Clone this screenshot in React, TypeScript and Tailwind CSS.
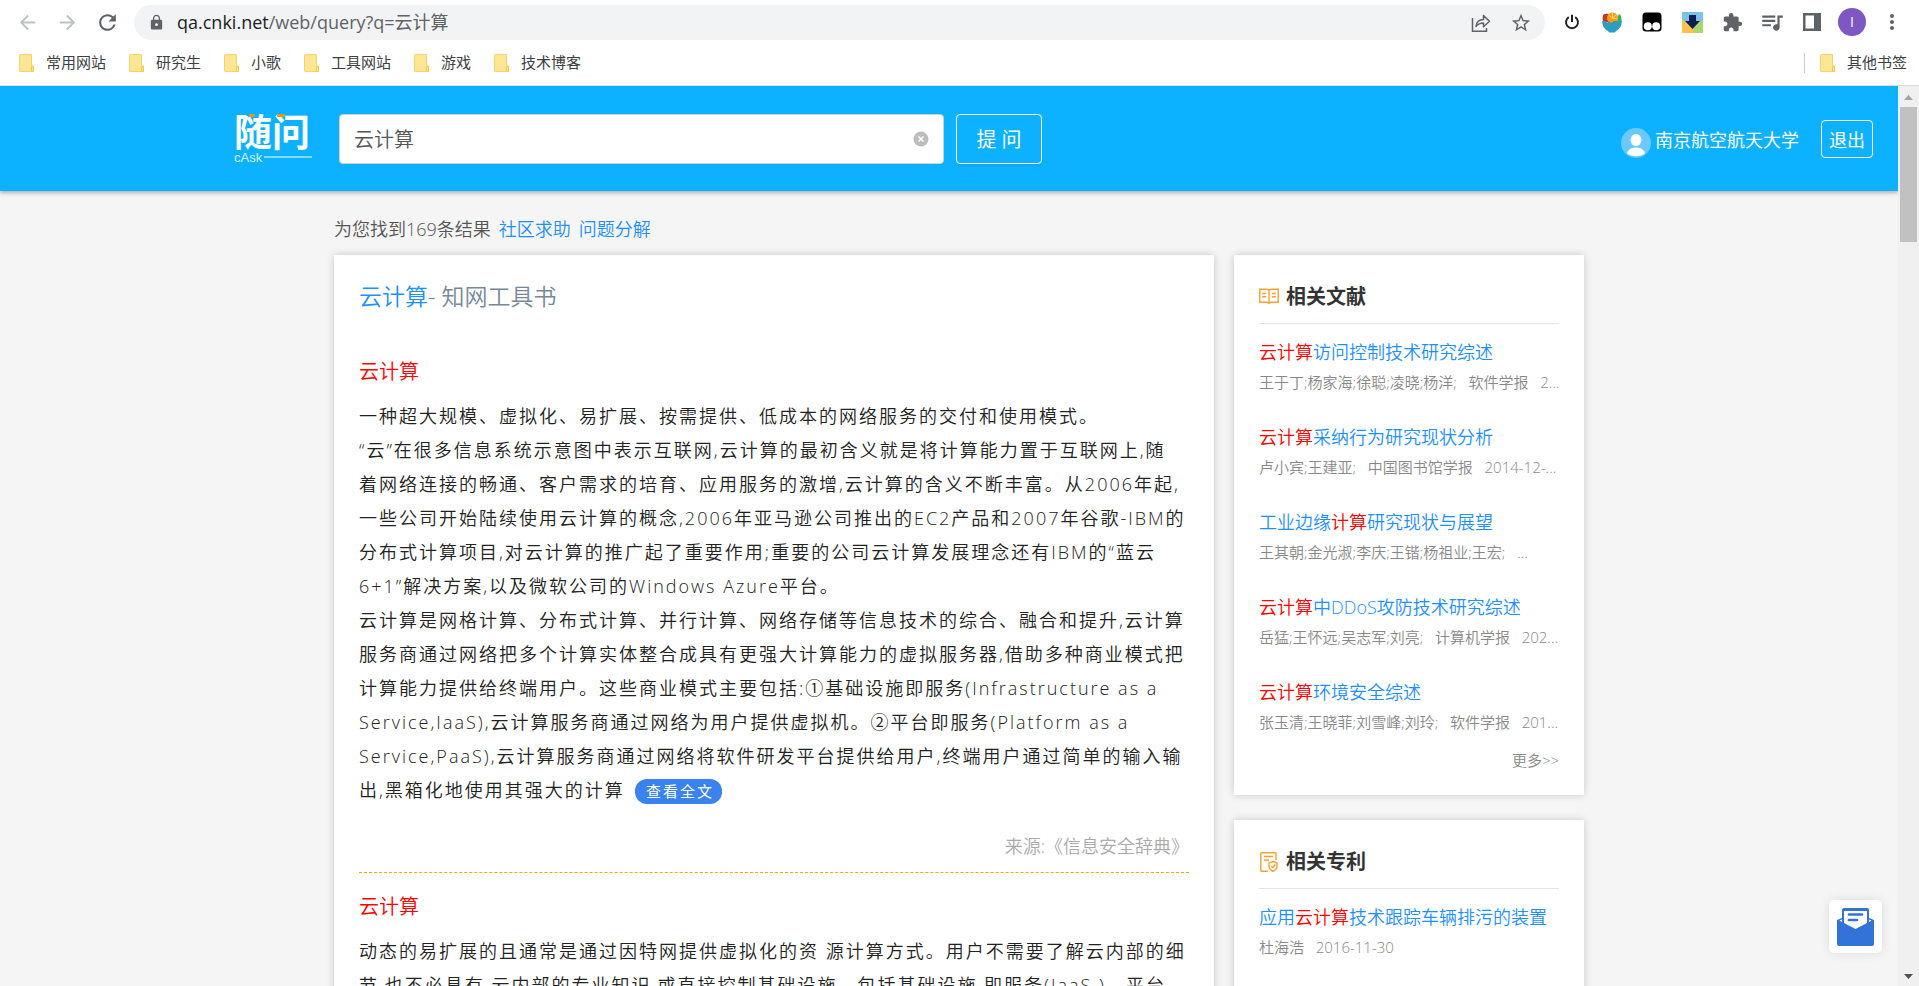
import type { ReactNode } from "react";
import {
  MdArrowBack,
  MdArrowForward,
  MdExtension,
  MdLock,
  MdMoreVert,
  MdQueueMusic,
  MdRefresh,
  MdStarBorder,
} from "react-icons/md";

const bookmarks = ["常用网站", "研究生", "小歌", "工具网站", "游戏", "技术博客"];

type Doc = { title: ReactNode; meta: string };

const papers: Doc[] = [
  { title: <><Hit>云计算</Hit>访问控制技术研究综述</>, meta: "王于丁;杨家海;徐聪;凌晓;杨洋;\u00a0\u00a0 软件学报\u00a0\u00a0 2..." },
  { title: <><Hit>云计算</Hit>采纳行为研究现状分析</>, meta: "卢小宾;王建亚;\u00a0\u00a0 中国图书馆学报\u00a0\u00a0 2014-12-..." },
  { title: <>工业边缘<Hit>计算</Hit>研究现状与展望</>, meta: "王其朝;金光淑;李庆;王锴;杨祖业;王宏;\u00a0\u00a0 ..." },
  { title: <><Hit>云计算</Hit>中DDoS攻防技术研究综述</>, meta: "岳猛;王怀远;吴志军;刘亮;\u00a0\u00a0 计算机学报\u00a0\u00a0 202..." },
  { title: <><Hit>云计算</Hit>环境安全综述</>, meta: "张玉清;王晓菲;刘雪峰;刘玲;\u00a0\u00a0 软件学报\u00a0\u00a0 201..." },
];

const patents: Doc[] = [
  { title: <>应用<Hit>云计算</Hit>技术跟踪车辆排污的装置</>, meta: "杜海浩\u00a0\u00a0 2016-11-30" },
];

function Hit({ children }: { children: ReactNode }) {
  return <span className="text-[#ff0000]">{children}</span>;
}

function Folder() {
  return (
    <svg className="h-[18px] w-[15px] shrink-0" viewBox="0 0 15 18">
      <path d="M1 .5h11.5v11.5h2V17.5H1A.8.8 0 0 1 .5 17V1Z" fill="#ffe694" stroke="#f6d36c" />
      <path d="M12.5 17.5v-5h2v5Z" fill="#ffe694" stroke="#f2c94c" />
    </svg>
  );
}

function ToolButton({ label, children }: { label: string; children: ReactNode }) {
  return (
    <button aria-label={label} className="flex h-9 w-10 items-center justify-center text-[#5f6368]">
      {children}
    </button>
  );
}

function BrowserBar() {
  return (
    <div className="shrink-0 border-b border-[#dadce0] bg-white">
      <div className="flex h-10 items-end gap-[7px] px-[7px]">
        <div className="flex">
          <button aria-label="后退" className="flex h-9 w-10 items-center justify-center text-[#bdc1c6]">
            <MdArrowBack size={23} />
          </button>
          <button aria-label="前进" className="flex h-9 w-10 items-center justify-center text-[#bdc1c6]">
            <MdArrowForward size={23} />
          </button>
          <ToolButton label="刷新"><MdRefresh size={25} /></ToolButton>
        </div>
        <div className="flex h-[35px] min-w-0 flex-1 items-center rounded-full bg-[#f1f3f4] pr-1 pl-[14px]">
          <MdLock size={17} className="shrink-0 text-[#5f6368]" />
          <a href="#" className="ml-3 flex-1 truncate text-[18px] text-[#5f6368]">
            <span className="text-[#202124]">qa.cnki.net</span>/web/query?q=云计算
          </a>
          <ToolButton label="分享">
            <svg width="20" height="20" viewBox="0 0 20 20" fill="none" stroke="currentColor" strokeWidth="1.5">
              <path d="M1.5 5v13.2h14V15" />
              <path d="M5 13.5c.5-4.800 3-7 7.500-7V2.600l6 5.600-6 5.500V10C9 10 7 11 5 13.500Z" strokeLinejoin="round" />
            </svg>
          </ToolButton>
          <ToolButton label="收藏"><MdStarBorder size={22} /></ToolButton>
        </div>
        <div className="flex">
          <ToolButton label="开关">
            <svg width="16" height="16" viewBox="0 0 16 16" fill="none" stroke="#202124" strokeWidth="2">
              <path d="M4.800 3.200a6 6 0 1 0 6.400 0M8 .8V8" />
            </svg>
          </ToolButton>
          <ToolButton label="扩展程序">
            <svg width="20" height="21" viewBox="0 0 20 21">
              <path d="M1 3Q3 1 7 2l3 8H1Q0 6 1 3Z" fill="#c0392b" />
              <path d="m13 9 4-7q3 1 2.500 8H13Z" fill="#3fae5a" />
              <circle cx="10.500" cy="6" r="5.500" fill="#ff9d0a" />
              <path d="m10.500 6-4-3m4 3V1m0 5 4-3.500M10.500 6l5 1" stroke="#ffe0a0" strokeWidth=".8" />
              <path d="M.3 9h3l2 1.500 2-1 2 1.500 3-2h7.400c.3 4.500-2.200 8.500-5.700 10l-1 1.500H7L6 19C2.500 17.500 0 13.500.3 9Z" fill="#2e9cbc" />
            </svg>
          </ToolButton>
          <ToolButton label="脚本">
            <svg width="20" height="20" viewBox="0 0 20 20">
              <rect x=".5" y=".5" width="19" height="19" rx="3.500" fill="#000" />
              <circle cx="5.800" cy="14.300" r="4" fill="#fff" />
              <circle cx="14.200" cy="14.300" r="4" fill="#fff" />
            </svg>
          </ToolButton>
          <ToolButton label="下载">
            <svg width="21" height="21" viewBox="0 0 21 21">
              <path d="M0 0h21v21H0Z" fill="#79c3ea" />
              <path d="M0 8v13h2l8.500-9Z" fill="#ffc04d" />
              <path d="m2 21 8.500-9L21 8v13Z" fill="#a5d86e" />
              <path d="m1 21 9-9 3 9Z" fill="#ffc04d" />
              <path d="M7 3h7v6h4l-7.500 8L3 9h4Z" fill="#0d1f4f" />
            </svg>
          </ToolButton>
          <ToolButton label="管理扩展"><MdExtension size={21} /></ToolButton>
          <ToolButton label="媒体">
            <MdQueueMusic size={26} />
          </ToolButton>
          <ToolButton label="侧边栏">
            <svg width="18" height="18" viewBox="0 0 18 18">
              <path d="M0 0h18v18H0ZM2.500 2.500v13H11v-13Z" fill="currentColor" fillRule="evenodd" />
            </svg>
          </ToolButton>
          <button className="flex h-9 w-10 items-center justify-center">
            <span className="flex size-7 items-center justify-center rounded-full bg-[#7e57c2] text-sm text-white">I</span>
          </button>
          <ToolButton label="更多"><MdMoreVert size={24} /></ToolButton>
        </div>
      </div>
      <nav className="flex h-[45px] items-center gap-[23px] pr-3 pl-[19px] text-[15px] text-[#3c4043]">
        {bookmarks.map((name) => (
          <a key={name} href="#" className="flex items-center gap-3">
            <Folder />
            {name}
          </a>
        ))}
        <a href="#" className="ml-auto flex items-center gap-3">
          <span className="mr-[3px] h-5 w-px bg-[#c8cbcf]" />
          <Folder />
          其他书签
        </a>
      </nav>
    </div>
  );
}

function Logo() {
  return (
    <a href="#" className="block w-[78px] text-white">
      <span className="relative block text-[38px] leading-[34px] font-bold">
        随问
        <span className="absolute top-0 left-[15px] h-[3px] w-[6px] rounded-sm bg-[#f39800]" />
        <span className="absolute top-0 left-[43px] h-[3px] w-2 rounded-sm bg-[#f39800]" />
      </span>
      <span className="mt-[3px] flex items-center gap-[2px] font-['Liberation_Sans',sans-serif] text-[13px] leading-[13px] text-[#d6f2ff]">
        cAsk
        <span className="h-[2px] flex-1 bg-[#86d9ff]" />
      </span>
    </a>
  );
}

function Header() {
  return (
    <header className="relative z-10 flex h-[105px] items-center bg-[#0cb2ff] pr-[25px] pl-[234px] font-normal shadow-[0_2px_4px_rgba(0,0,0,0.28)]">
      <Logo />
      <form className="ml-[27px] flex gap-3">
        <div className="flex h-[50px] w-[605px] items-center rounded-[4px] border border-[#d0d0d0] bg-white pr-[14px] pl-[14px]">
          <input
            aria-label="问题"
            defaultValue="云计算"
            className="min-w-0 flex-1 pt-[2px] text-xl font-[350] text-[#555] outline-none"
          />
          <button type="button" aria-label="清空">
            <svg width="16" height="16" viewBox="0 0 16 16">
              <circle cx="8" cy="8" r="7.500" fill="#bdbdbd" />
              <path d="m5.500 5.500 5 5m0-5-5 5" stroke="#fff" strokeWidth="1.500" />
            </svg>
          </button>
        </div>
        <button
          type="button"
          className="h-[50px] w-[86px] rounded-[4px] border border-white pt-[2px] text-xl text-white shadow-[0_2px_2px_rgba(0,0,0,0.06)]"
        >
          提 问
        </button>
      </form>
      <a href="#" className="ml-auto flex items-center gap-1 text-[18px] text-white">
        <svg className="mt-2" width="30" height="30" viewBox="0 0 30 30">
          <circle cx="15" cy="15" r="15" fill="#6bc9ff" />
          <ellipse cx="15" cy="12" rx="5.500" ry="6" fill="#fff" />
          <path d="M6 25.500c1-4 4.500-6 9-6s8 2 9 6c-5 3.500-13 3.500-18 0Z" fill="#fff" />
        </svg>
        <span className="pt-1">南京航空航天大学</span>
      </a>
      <button className="ml-[22px] h-[38px] w-[52px] rounded-[4px] border border-white pt-1 text-[18px] text-white">
        退出
      </button>
    </header>
  );
}

function Answer() {
  return (
    <section className="min-w-0 flex-1 bg-white px-[25px] pt-[21px] shadow-[0_0_8px_rgba(0,0,0,0.18)]">
      <h1 className="text-[23px] leading-10 text-[#778899]">
        <a href="#" className="text-[#1e8fff]">云计算</a>- 知网工具书
      </h1>
      <h2 className="mt-9 text-xl leading-10 text-[#ff0000]">云计算</h2>
      <div className="mt-[7px] text-[18px] leading-[34px] tracking-[2px] text-[#222]">
        <p>一种超大规模、虚拟化、易扩展、按需提供、低成本的网络服务的交付和使用模式。</p>
        <p>
          “云”在很多信息系统示意图中表示互联网,云计算的最初含义就是将计算能力置于互联网上,随
          <br />
          着网络连接的畅通、客户需求的培育、应用服务的激增,云计算的含义不断丰富。从2006年起,
          <br />
          一些公司开始陆续使用云计算的概念,2006年亚马逊公司推出的EC2产品和2007年谷歌-IBM的
          <br />
          分布式计算项目,对云计算的推广起了重要作用;重要的公司云计算发展理念还有IBM的“蓝云
          <br />
          6+1”解决方案,以及微软公司的Windows Azure平台。
        </p>
        <p>
          云计算是网格计算、分布式计算、并行计算、网络存储等信息技术的综合、融合和提升,云计算服务商通过网络把多个计算实体整合成具有更强大计算能力的虚拟服务器,借助多种商业模式把计算能力提供给终端用户。这些商业模式主要包括:①基础设施即服务(Infrastructure
          as a Service,IaaS),云计算服务商通过网络为用户提供虚拟机。②平台即服务(Platform as a
          Service,PaaS),云计算服务商通过网络将软件研发平台提供给用户,终端用户通过简单的输入输出,黑箱化地使用其强大的计算
          <button className="ml-[10px] h-[25px] rounded-[12px] bg-[#3a82ee] pr-2 pl-[11px] text-[15px] leading-[25px] font-normal tracking-[2px] text-white">
            查看全文
          </button>
        </p>
      </div>
      <p className="mt-6 text-right text-[18px] leading-[30px] text-[#aaa]">来源:《信息安全辞典》</p>
      <hr className="mt-[11px] border-t border-dashed border-[#ffa500]" />
      <h2 className="mt-[14px] text-xl leading-10 text-[#ff0000]">云计算</h2>
      <p className="mt-[7px] text-[18px] leading-[34px] tracking-[2px] text-[#222]">
        动态的易扩展的且通常是通过因特网提供虚拟化的资 源计算方式。用户不需要了解云内部的细
        <br />
        节,也不必具有 云内部的专业知识,或直接控制基础设施。包括基础设施 即服务(IaaS )、平台
      </p>
    </section>
  );
}

function DocCard({ icon, title, docs, children }: { icon: ReactNode; title: string; docs: Doc[]; children?: ReactNode }) {
  return (
    <section className="bg-white px-[25px] pt-[22px] pb-5 shadow-[0_0_8px_rgba(0,0,0,0.18)]">
      <h2 className="flex items-center gap-[7px] border-b border-[#e4e4e4] pb-[7px] text-xl leading-[39px] font-bold text-[#333]">
        {icon}
        {title}
      </h2>
      <ul className="mt-[14px] flex flex-col leading-[30px]">
        {docs.map((doc) => (
          <li key={doc.meta} className="pb-[25px]">
            <a href="#" className="block truncate text-[18px] leading-[29px] text-[#1e8fff]">{doc.title}</a>
            <p className="pb-px text-[15px] whitespace-nowrap text-[#888]">{doc.meta}</p>
          </li>
        ))}
      </ul>
      {children}
    </section>
  );
}

function BookIcon() {
  return (
    <svg width="20" height="20" viewBox="0 0 20 20" fill="none" stroke="#f5a033" strokeWidth="1.400">
      <path d="M.8 2.200h6.700q2 0 2.500 1.300.500-1.300 2.500-1.300h6.700v13h-6.500q-1.700 0-2.700 1-1-1-2.700-1H.8ZM10 3.500v12.500" />
      <path d="M3.200 6.500h4M3.200 9.800h4M12.800 6.500h4M12.800 9.800h4" />
    </svg>
  );
}

function PatentIcon() {
  return (
    <svg width="20" height="20" viewBox="0 0 20 20" fill="none" stroke="#f5a033" strokeWidth="1.400">
      <path d="M17 8V1.500Q17 .8 16.200.8H2.500Q1.800.8 1.800 1.500v17q0 .700.700.700H9" />
      <path d="M5 4.500h9M5 8h5M14 9.500l4 1.500v3.500q0 3-4 4.800-4-1.800-4-4.800V11Z" />
      <path d="m12.300 14 1.500 1.500 2.500-3" />
    </svg>
  );
}

export default function App() {
  return (
    <div className="flex h-screen flex-col overflow-hidden bg-[#f5f5f5] font-['Open_Sans','Noto_Sans_CJK_SC',sans-serif]">
      <BrowserBar />
      <div className="flex min-h-0 flex-1">
        <div className="min-w-0 flex-1 overflow-hidden font-[350]">
          <Header />
          <main className="mx-auto max-w-[1270px] pl-5">
            <div className="flex h-16 items-center gap-2 pt-3 text-[18px] text-[#555]">
              <span>为您找到169条结果</span>
              <a href="#" className="text-[#1e8fff]">社区求助</a>
              <a href="#" className="text-[#1e8fff]">问题分解</a>
            </div>
            <div className="flex items-start gap-5">
              <Answer />
              <aside className="flex w-[350px] flex-col gap-[25px]">
                <DocCard icon={<BookIcon />} title="相关文献" docs={papers}>
                  <a href="#" className="-mt-[18px] block text-right text-[15px] leading-[30px] text-[#888]">更多&gt;&gt;</a>
                </DocCard>
                <DocCard icon={<PatentIcon />} title="相关专利" docs={patents} />
              </aside>
            </div>
          </main>
        </div>
        <div className="flex w-[21px] shrink-0 flex-col items-center bg-[#f0f0f0]">
          <svg className="h-[21px] w-[9px]" viewBox="0 0 9 21"><path d="M0 14h9L4.500 9Z" fill="#a3a3a3" /></svg>
          <div className="h-[135px] w-[17px] bg-[#c1c1c1]" />
          <svg className="mt-auto h-[21px] w-[9px]" viewBox="0 0 9 21"><path d="M0 9h9l-4.500 5Z" fill="#505050" /></svg>
        </div>
      </div>
      <button
        aria-label="意见反馈"
        className="fixed right-[37px] bottom-[33px] flex size-[53px] items-center justify-center rounded-[5px] bg-white shadow-[0_0_12px_rgba(0,0,0,0.1)]"
      >
        <svg width="37" height="38" viewBox="0 0 37 38">
          <path d="M5 10V2Q5 0 7 0h23q2 0 2 2v8l5 2v24q0 2-2 2H2q-2 0-2-2V12Z" fill="#3373d9" />
          <path d="M7 3h23v12l-11.500 6L7 15ZM2.500 12.500 5 11.500v2.500ZM34.500 12.500l-2.500-1v2.500Z" fill="#fff" />
          <path d="M12 6.500h13M12 12h8" stroke="#3373d9" strokeWidth="2.600" strokeLinecap="round" />
        </svg>
      </button>
    </div>
  );
}
